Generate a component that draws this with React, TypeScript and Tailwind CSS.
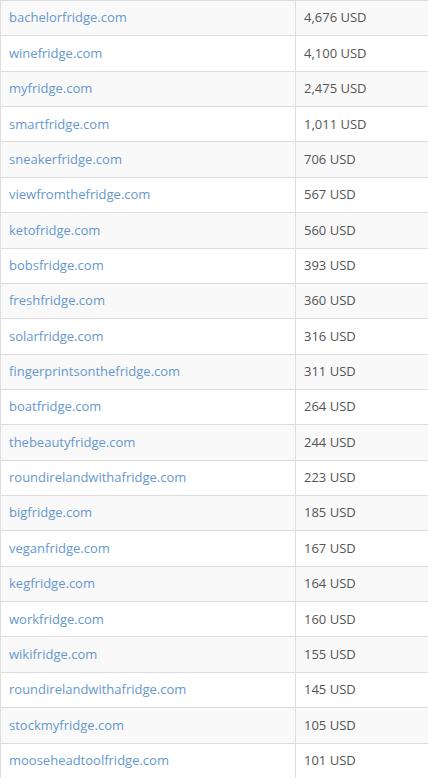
import React from "react";

const rows: [string, string][] = [
  ["bachelorfridge.com", "4,676 USD"],
  ["winefridge.com", "4,100 USD"],
  ["myfridge.com", "2,475 USD"],
  ["smartfridge.com", "1,011 USD"],
  ["sneakerfridge.com", "706 USD"],
  ["viewfromthefridge.com", "567 USD"],
  ["ketofridge.com", "560 USD"],
  ["bobsfridge.com", "393 USD"],
  ["freshfridge.com", "360 USD"],
  ["solarfridge.com", "316 USD"],
  ["fingerprintsonthefridge.com", "311 USD"],
  ["boatfridge.com", "264 USD"],
  ["thebeautyfridge.com", "244 USD"],
  ["roundirelandwithafridge.com", "223 USD"],
  ["bigfridge.com", "185 USD"],
  ["veganfridge.com", "167 USD"],
  ["kegfridge.com", "164 USD"],
  ["workfridge.com", "160 USD"],
  ["wikifridge.com", "155 USD"],
  ["roundirelandwithafridge.com", "145 USD"],
  ["stockmyfridge.com", "105 USD"],
  ["mooseheadtoolfridge.com", "101 USD"],
];

export default function App() {
  return (
    <div className="w-[428px] h-[778px] overflow-hidden bg-white" style={{ fontFamily: '"Open Sans", sans-serif' }}>
      <div className="border-l border-t border-[#dddddd]">
        {rows.map(([d, p], i) => (
          <div
            key={i}
            className={`flex h-[35.36px] border-b border-[#dddddd] text-[13px] ${i % 2 === 0 ? "bg-[#f9f9f9]" : "bg-white"}`}
          >
            <div className="w-[295px] shrink-0 border-r border-[#dddddd] flex items-center pl-[8px] text-[#6598cf]">{d}</div>
            <div className="flex-1 flex items-center pl-[8px] text-[#555555]">{p}</div>
          </div>
        ))}
      </div>
    </div>
  );
}
